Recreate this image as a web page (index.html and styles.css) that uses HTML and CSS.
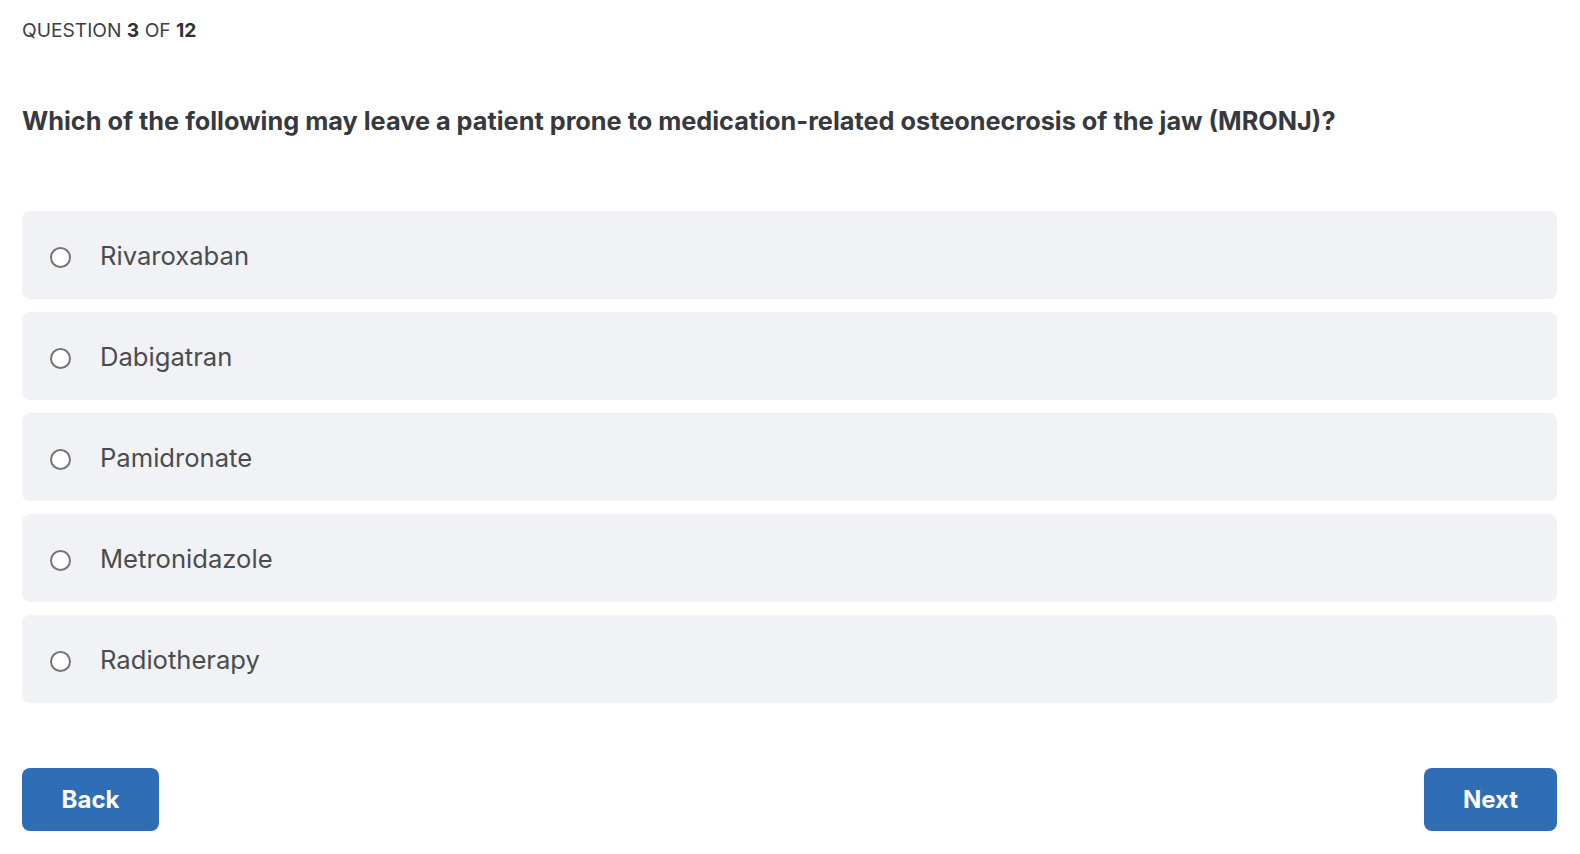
FILE: index.html
```html
<!DOCTYPE html>
<html lang="en">
<head>
<meta charset="utf-8">
<title>Quiz</title>
<link rel="stylesheet" href="styles.css">
</head>
<body>
<main class="quiz">
  <div class="progress">QUESTION <b>3</b> OF <b>12</b></div>
  <h1 class="question">Which of the following may leave a patient prone to medication-related osteonecrosis of the jaw (MRONJ)?</h1>
  <div class="options">
    <label class="option"><span class="radio"></span><span class="label">Rivaroxaban</span></label>
    <label class="option"><span class="radio"></span><span class="label">Dabigatran</span></label>
    <label class="option"><span class="radio"></span><span class="label">Pamidronate</span></label>
    <label class="option"><span class="radio"></span><span class="label">Metronidazole</span></label>
    <label class="option"><span class="radio"></span><span class="label">Radiotherapy</span></label>
  </div>
  <div class="nav">
    <button class="btn btn-back">Back</button>
    <button class="btn btn-next">Next</button>
  </div>
</main>
</body>
</html>
```
FILE: styles.css
```css
html, body {
  margin: 0;
  padding: 0;
  background: #ffffff;
}
body {
  font-family: Inter, "Liberation Sans", Arial, sans-serif;
  color: #3a3c40;
}
.quiz {
  padding: 0 23px 0 22px;
}
.progress {
  margin-top: 18px;
  height: 24px;
  line-height: 24px;
  font-size: 19.2px;
  color: #3c3f44;
}
.progress b {
  font-weight: 700;
  color: #2e3035;
}
.question {
  margin: 63px 0 0 0;
  font-size: 25.3px;
  line-height: 32px;
  font-weight: 700;
  color: #36393e;
}
.options {
  margin-top: 74px;
  display: flex;
  flex-direction: column;
  gap: 13px;
}
.option {
  display: flex;
  align-items: center;
  height: 88px;
  background: #f1f2f5;
  border-radius: 8px;
  padding-left: 28px;
  cursor: pointer;
}
.radio {
  width: 17px;
  height: 17px;
  margin-top: 4px;
  border: 2px solid #747474;
  border-radius: 50%;
  background: #ffffff;
  flex: none;
}
.label {
  margin-left: 29px;
  font-size: 25.6px;
  color: #4a4c4e;
}
.nav {
  margin-top: 65px;
  display: flex;
  justify-content: space-between;
}
.btn {
  height: 63px;
  border: none;
  border-radius: 8px;
  background: #2f6db4;
  color: #ffffff;
  font-family: Inter, "Liberation Sans", Arial, sans-serif;
  font-weight: 700;
  font-size: 24px;
  cursor: pointer;
}
.btn-back {
  width: 137px;
}
.btn-next {
  width: 133px;
}
```
